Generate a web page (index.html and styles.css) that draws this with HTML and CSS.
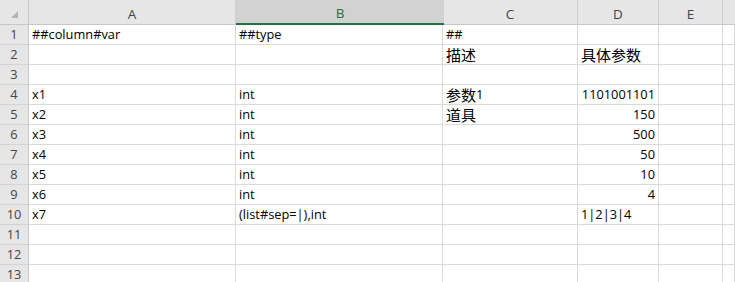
FILE: index.html
```html
<!DOCTYPE html>
<html>
<head>
<meta charset="utf-8">
<link rel="stylesheet" href="styles.css">
</head>
<body>
<div class="sheet">
  <div class="corner"><span class="tri"></span></div>
  <div class="colhead">A</div>
  <div class="colhead selected">B</div>
  <div class="colhead">C</div>
  <div class="colhead">D</div>
  <div class="colhead">E</div>
  <div class="colhead last"></div>

  <div class="rowhead">1</div>
  <div class="cell">##column#var</div>
  <div class="cell">##type</div>
  <div class="cell">##</div>
  <div class="cell"></div>
  <div class="cell"></div>
  <div class="cell"></div>

  <div class="rowhead">2</div>
  <div class="cell"></div>
  <div class="cell"></div>
  <div class="cell cjk">描述</div>
  <div class="cell cjk">具体参数</div>
  <div class="cell"></div>
  <div class="cell"></div>

  <div class="rowhead">3</div>
  <div class="cell"></div>
  <div class="cell"></div>
  <div class="cell"></div>
  <div class="cell"></div>
  <div class="cell"></div>
  <div class="cell"></div>

  <div class="rowhead">4</div>
  <div class="cell">x1</div>
  <div class="cell">int</div>
  <div class="cell"><span class="cjk">参数</span>1</div>
  <div class="cell num">1101001101</div>
  <div class="cell"></div>
  <div class="cell"></div>

  <div class="rowhead">5</div>
  <div class="cell">x2</div>
  <div class="cell">int</div>
  <div class="cell cjk">道具</div>
  <div class="cell num">150</div>
  <div class="cell"></div>
  <div class="cell"></div>

  <div class="rowhead">6</div>
  <div class="cell">x3</div>
  <div class="cell">int</div>
  <div class="cell"></div>
  <div class="cell num">500</div>
  <div class="cell"></div>
  <div class="cell"></div>

  <div class="rowhead">7</div>
  <div class="cell">x4</div>
  <div class="cell">int</div>
  <div class="cell"></div>
  <div class="cell num">50</div>
  <div class="cell"></div>
  <div class="cell"></div>

  <div class="rowhead">8</div>
  <div class="cell">x5</div>
  <div class="cell">int</div>
  <div class="cell"></div>
  <div class="cell num">10</div>
  <div class="cell"></div>
  <div class="cell"></div>

  <div class="rowhead">9</div>
  <div class="cell">x6</div>
  <div class="cell">int</div>
  <div class="cell"></div>
  <div class="cell num">4</div>
  <div class="cell"></div>
  <div class="cell"></div>

  <div class="rowhead">10</div>
  <div class="cell">x7</div>
  <div class="cell">(list#sep=|),int</div>
  <div class="cell"></div>
  <div class="cell">1|2|3|4</div>
  <div class="cell"></div>
  <div class="cell"></div>

  <div class="rowhead">11</div>
  <div class="cell"></div>
  <div class="cell"></div>
  <div class="cell"></div>
  <div class="cell"></div>
  <div class="cell"></div>
  <div class="cell"></div>

  <div class="rowhead">12</div>
  <div class="cell"></div>
  <div class="cell"></div>
  <div class="cell"></div>
  <div class="cell"></div>
  <div class="cell"></div>
  <div class="cell"></div>

  <div class="rowhead">13</div>
  <div class="cell"></div>
  <div class="cell"></div>
  <div class="cell"></div>
  <div class="cell"></div>
  <div class="cell"></div>
  <div class="cell"></div>
</div>
</body>
</html>
```

FILE: styles.css
```css
html, body {
  margin: 0;
  padding: 0;
  background: #ffffff;
  overflow: hidden;
}

.sheet {
  display: grid;
  grid-template-columns: 29px 207px 207px 135px 81px 64px 1fr;
  grid-template-rows: 25px repeat(13, 20px);
  width: 735px;
  font-family: "Open Sans", "Noto Sans CJK SC", sans-serif;
  font-size: 12.8px;
  color: #000;
}

.corner {
  background: #e6e6e6;
  border-right: 1px solid #c8c8c8;
  border-bottom: 1px solid #c8c8c8;
  box-sizing: border-box;
  position: relative;
}

.tri {
  position: absolute;
  left: 11px;
  top: 11px;
  width: 0;
  height: 0;
  border-left: 7px solid transparent;
  border-bottom: 7px solid #b4b4b4;
}

.colhead {
  background: #e6e6e6;
  border-right: 1px solid #d0d0d0;
  border-bottom: 1px solid #c8c8c8;
  box-sizing: border-box;
  display: flex;
  align-items: center;
  justify-content: center;
  padding-top: 3px;
  color: #444;
  font-size: 13.5px;
}

.colhead.last {
  border-right: none;
}

.colhead.selected {
  background: #d2d2d2;
  color: #217346;
  border-bottom: 2px solid #217346;
  margin-right: -1px;
  border-right: none;
  position: relative;
}

.rowhead {
  background: #e6e6e6;
  border-right: 1px solid #c8c8c8;
  border-bottom: 1px solid #d4d4d4;
  box-sizing: border-box;
  display: flex;
  align-items: flex-end;
  justify-content: center;
  padding-bottom: 1px;
  color: #444;
  font-size: 12.8px;
}

.cell {
  border-right: 1px solid #dadada;
  border-bottom: 1px solid #dadada;
  box-sizing: border-box;
  display: flex;
  align-items: flex-end;
  padding: 0 3px 1px 3px;
  white-space: nowrap;
  overflow: visible;
  line-height: 17px;
}

.cell.num {
  justify-content: flex-end;
}

.cjk {
  font-family: "Noto Sans CJK SC", sans-serif;
  font-size: 15px;
}
```
